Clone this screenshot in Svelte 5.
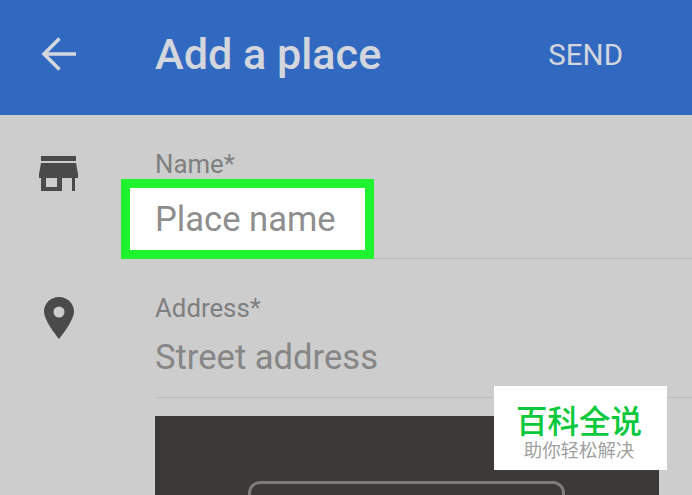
<script>
  const fields = [
    { id: 'name', label: 'Name*', placeholder: 'Place name' },
    { id: 'address', label: 'Address*', placeholder: 'Street address' }
  ];
</script>

<div class="screen">
  <header class="topbar">
    <svg class="back" viewBox="0 0 36 36" width="36" height="36">
      <path d="M35 18H3M18.500 2.500L3 18L18.500 33.500" fill="none" stroke="#d3d6dc" stroke-width="3.600" />
    </svg>
    <h1>Add a place</h1>
    <span class="send">SEND</span>
  </header>

  <div class="form">
    {#each fields as field}
      <div class="row">
        <div class="icon-col">
          {#if field.id === 'name'}
            <svg viewBox="0 0 39 35" width="39" height="35">
              <path fill="#4a4a4a" fill-rule="evenodd" d="M2 0h35v5H2zM2 7h35l2 11v4h-3v13h-3V22H23v13H2V22H0v-4zM7 22v9h11v-9z" />
            </svg>
          {:else}
            <svg viewBox="0 0 32 44" width="32" height="44">
              <path fill="#4a4a4a" fill-rule="evenodd" d="M16 1C7.500 1 1 7.600 1 15.500 1 25 16 43 16 43s15-18 15-27.500C31 7.600 24.500 1 16 1zm0 9.500a5.500 5.500 0 1 1 0 11 5.500 5.500 0 0 1 0-11z" />
            </svg>
          {/if}
        </div>
        <div class="field">
          <div class="label">{field.label}</div>
          <div class="placeholder" class:marked={field.id === 'name'}>{field.placeholder}</div>
        </div>
      </div>
    {/each}

    <div class="photo-row">
      <div class="photo">
        <div class="photo-button"></div>
      </div>
    </div>
  </div>

  <div class="watermark">
    <div class="wm-title">百科全说</div>
    <div class="wm-sub">助你轻松解决</div>
  </div>
</div>

<style>
  :global(body) {
    margin: 0;
    overflow: hidden;
  }

  .screen {
    position: relative;
    width: 692px;
    height: 495px;
    overflow: hidden;
    background: #cdcdcd;
    font-family: Roboto, "Liberation Sans", "Noto Sans CJK SC", sans-serif;
  }

  .topbar {
    height: 115px;
    background: #3269c0;
    display: flex;
    align-items: center;
    color: #d3d6dc;
    box-sizing: border-box;
    padding: 0 69px 7px 41px;
  }

  .back {
    flex: none;
    margin-right: 78px;
  }

  h1 {
    flex: 1;
    margin: 2px 0 0;
    font-size: 43.200px;
    font-weight: 500;
    line-height: 48px;
    white-space: nowrap;
  }

  .send {
    margin-top: 2px;
    font-size: 29.500px;
    font-weight: 400;
    line-height: 32px;
  }

  .row {
    display: flex;
    height: 139px;
  }

  .row:first-child {
    height: 144px;
  }

  .icon-col {
    width: 155px;
    flex: none;
    box-sizing: border-box;
    padding: 41px 0 0 39px;
  }

  .row + .row .icon-col {
    padding: 37px 0 0 43px;
  }

  .field {
    flex: 1;
    border-bottom: 1px solid #bcbcbc;
    box-sizing: border-box;
    padding-top: 35px;
  }

  .label {
    font-size: 25.800px;
    line-height: 28px;
    color: #7f7f7f;
  }

  .placeholder {
    position: relative;
    z-index: 0;
    margin-top: 15px;
    font-size: 34.600px;
    line-height: 40px;
    color: #868686;
  }

  .placeholder.marked {
    margin-top: 21px;
    color: #8e8e8e;
  }

  /* green call-out painted behind the first placeholder */
  .placeholder.marked::before {
    content: "";
    position: absolute;
    z-index: -1;
    left: -34px;
    top: -20px;
    width: 253px;
    height: 80px;
    box-sizing: border-box;
    border: 9px solid #1ff22e;
    background: #fff;
  }

  .photo-row {
    padding: 18px 33px 0 155px;
  }

  .photo {
    height: 120px;
    background: #3b3a38;
    box-sizing: border-box;
    padding: 65px 94px 0 93px;
  }

  .photo-button {
    height: 60px;
    border: 3px solid #7d7c7a;
    border-radius: 12px;
  }

  .watermark {
    position: absolute;
    left: 494px;
    top: 386px;
    width: 173px;
    height: 84px;
    box-sizing: border-box;
    padding: 21px 3px 0 0;
    background: #fff;
    text-align: center;
    font-family: "Liberation Sans", "Noto Sans CJK SC", sans-serif;
  }

  .wm-title {
    font-size: 31.500px;
    line-height: 30px;
    font-weight: 500;
    color: #0ac83c;
  }

  .wm-sub {
    margin-top: 5px;
    font-size: 18.400px;
    line-height: 18px;
    color: #a0a0a0;
  }
</style>
